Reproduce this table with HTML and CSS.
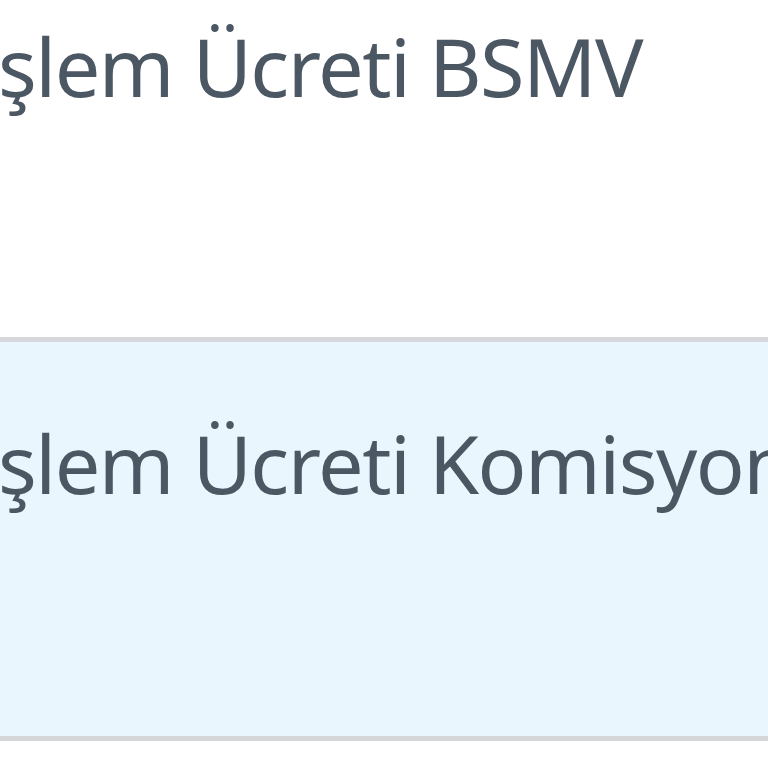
FILE: index.html
```html
<!DOCTYPE html>
<html lang="tr">
<head>
  <meta charset="UTF-8" />
  <meta name="viewport" content="width=device-width, initial-scale=1.0"/>
  <title>İşlem Ücretleri</title>
  <link rel="stylesheet" href="styles.css">
</head>
<body>

  <!-- Fee rows -->
  <div class="fee-table">
    <div class="fee-row">
      <span class="fee-name">İşlem Ücreti BSMV</span>
    </div>
    <div class="fee-row striped">
      <span class="fee-name">İşlem Ücreti Komisyonu</span>
    </div>
    <div class="fee-row">
      <span class="fee-name">&nbsp;</span>
    </div>
  </div>

</body>
</html>
```

FILE: styles.css
```css
body {
  margin: 0;
  background-color: #ffffff;
  overflow: hidden;
  font-family: "Noto Sans", "Open Sans", sans-serif;
}
.fee-table {
  margin-top: -60px;
  margin-left: -28px;
  width: 900px;
}
.fee-row {
  height: 397px;
  box-sizing: border-box;
  padding-top: 72px;
  border-top: 5px solid #d6d8dc;
}
.fee-row.striped {
  background-color: #eaf6fd;
  border-bottom: 5px solid #d4d6d8;
  height: 404px;
}
.striped + .fee-row {
  border-top: none;
}
.fee-name {
  font-size: 81px;
  line-height: 1.2;
  letter-spacing: -1.5px;
  color: #4c5764;
  white-space: nowrap;
}
```
